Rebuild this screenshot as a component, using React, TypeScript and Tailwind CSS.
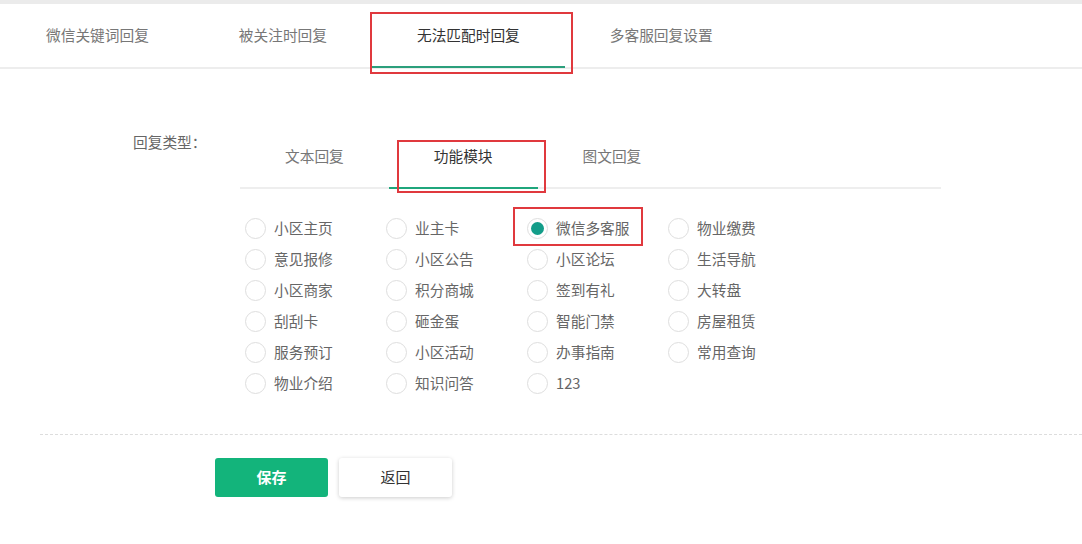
import React from 'react';

const topTabs = ['微信关键词回复', '被关注时回复', '无法匹配时回复', '多客服回复设置'];
const subTabs = ['文本回复', '功能模块', '图文回复'];
const options = [
  ['小区主页', '业主卡', '微信多客服', '物业缴费'],
  ['意见报修', '小区公告', '小区论坛', '生活导航'],
  ['小区商家', '积分商城', '签到有礼', '大转盘'],
  ['刮刮卡', '砸金蛋', '智能门禁', '房屋租赁'],
  ['服务预订', '小区活动', '办事指南', '常用查询'],
  ['物业介绍', '知识问答', '123'],
];

function Radio({ label, checked }: { label: string; checked?: boolean }) {
  return (
    <div className="relative flex items-center h-[31px]">
      <span className="w-[21px] h-[21px] rounded-full border border-[#dedede] flex items-center justify-center bg-white">
        {checked && <span className="w-[13px] h-[13px] rounded-full bg-[#139d89]" />}
      </span>
      <span className="ml-[8px] text-[14.7px] text-[#666]">{label}</span>
      {checked && (
        <span className="absolute left-[-14px] top-[-6px] w-[130px] h-[39px] border-2 border-[#e0393e] pointer-events-none" />
      )}
    </div>
  );
}

export default function App() {
  return (
    <div
      className="w-[1082px] h-[544px] bg-white overflow-hidden"
      style={{ fontFamily: '"Noto Sans CJK SC", "Noto Sans", sans-serif' }}
    >
      <div className="h-[4px] bg-[#ebebeb]" />
      {/* Top tabs */}
      <div className="flex h-[65px] pl-[1px] border-b-2 border-[#ededed]">
        {topTabs.map((t, i) => (
          <div
            key={t}
            className={`relative flex items-center px-[45px] text-[14.7px] ${
              i === 2 ? 'text-[#333]' : 'text-[#777]'
            }`}
          >
            <span>{t}</span>
            {i === 2 && (
              <>
                <span className="absolute left-0 right-0 bottom-[-1px] h-[2px] bg-[#2b9f7c]" />
                <span className="absolute left-[-2px] right-[-8px] top-[8px] bottom-[-7px] border-2 border-[#e0393e]" />
              </>
            )}
          </div>
        ))}
      </div>

      {/* Form */}
      <div className="flex pt-[65px]">
        <div className="w-[240px] pl-[133px] text-[14.7px] text-[#666] leading-[22px] -mt-[3px]">回复类型：</div>
        <div className="w-[701px]">
          <div className="flex h-[55px] border-b-2 border-[#eeeeee]">
            {subTabs.map((t, i) => (
              <div
                key={t}
                className={`relative flex items-center px-[45px] text-[14.7px] ${
                  i === 1 ? 'text-[#333]' : 'text-[#777]'
                }`}
              >
                <span className="-mt-[8px]">{t}</span>
                {i === 1 && (
                  <>
                    <span className="absolute left-0 right-0 bottom-[-2px] h-[2px] bg-[#1fa67c]" />
                    <span className="absolute left-[8px] right-[-8px] top-[6px] bottom-[-6px] border-2 border-[#e0393e]" />
                  </>
                )}
              </div>
            ))}
          </div>
          <div className="pl-[5px] pt-[24px]">
            {options.map((row, r) => (
              <div key={r} className="grid grid-cols-[141px_141px_141px_141px]">
                {row.map((o) => (
                  <Radio key={o} label={o} checked={o === '微信多客服'} />
                ))}
              </div>
            ))}
          </div>
        </div>
      </div>

      <div className="ml-[40px] mt-[35px] border-t border-dashed border-[#dddddd]" />

      <div className="flex gap-[11px] pl-[215px] pt-[23px]">
        <button className="w-[113px] h-[39px] rounded-[3px] bg-[#13b47b] text-white text-[15px] font-bold">
          保存
        </button>
        <button className="w-[113px] h-[39px] rounded-[3px] bg-white text-[#333] text-[15px] shadow-[0_1px_4px_rgba(0,0,0,0.2)]">
          返回
        </button>
      </div>
    </div>
  );
}
